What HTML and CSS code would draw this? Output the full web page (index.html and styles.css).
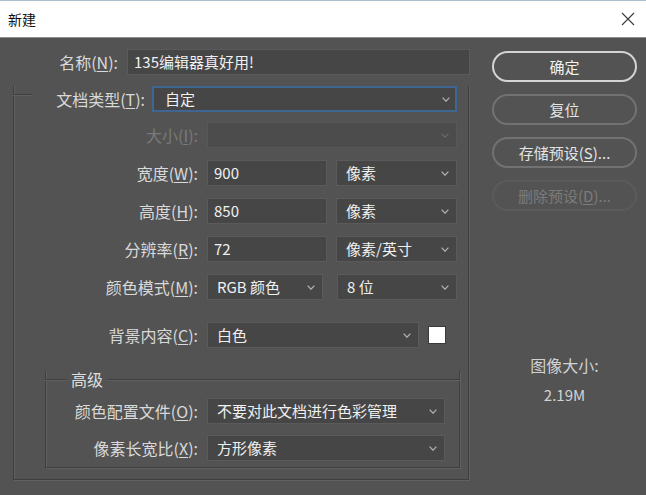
FILE: index.html
```html
<!DOCTYPE html>
<html lang="zh-CN">
<head>
    <meta charset="UTF-8">
    <meta name="viewport" content="width=device-width, initial-scale=1.0">
    <title>新建</title>
    <link rel="stylesheet" href="styles.css">
</head>
<body>
<div class="dialog">
    <!-- window title -->
    <div class="titlebar">
        <span class="title">新建</span>
        <span class="close">
            <svg width="14" height="14" viewBox="0 0 14 14"><path d="M1 1L13 13M13 1L1 13" stroke="#3a3a3a" stroke-width="1.1" fill="none"/></svg>
        </span>
    </div>

    <div class="content">
        <div class="form">
            <div class="row name-row">
                <label class="label">名称(<u>N</u>):</label>
                <div class="field name-field">135编辑器真好用!</div>
            </div>

            <div class="doc-box">
                <div class="row type-row">
                    <span class="stub"></span>
                    <label class="label">文档类型(<u>T</u>):</label>
                    <div class="field select type-select">
                        <span>自定</span>
                        <svg class="chev" width="8" height="5" viewBox="0 0 8 5"><path d="M0.6 0.6L4 4.2L7.4 0.6" fill="none" stroke="currentColor" stroke-width="1.2"/></svg>
                    </div>
                </div>

                <div class="row size-row disabled">
                    <label class="label">大小(<u>I</u>):</label>
                    <div class="field select size-select">
                        <span></span>
                        <svg class="chev" width="8" height="5" viewBox="0 0 8 5"><path d="M0.6 0.6L4 4.2L7.4 0.6" fill="none" stroke="currentColor" stroke-width="1.2"/></svg>
                    </div>
                </div>

                <div class="row">
                    <label class="label">宽度(<u>W</u>):</label>
                    <div class="field num">900</div>
                    <div class="field select unit">
                        <span>像素</span>
                        <svg class="chev" width="8" height="5" viewBox="0 0 8 5"><path d="M0.6 0.6L4 4.2L7.4 0.6" fill="none" stroke="currentColor" stroke-width="1.2"/></svg>
                    </div>
                </div>

                <div class="row">
                    <label class="label">高度(<u>H</u>):</label>
                    <div class="field num">850</div>
                    <div class="field select unit">
                        <span>像素</span>
                        <svg class="chev" width="8" height="5" viewBox="0 0 8 5"><path d="M0.6 0.6L4 4.2L7.4 0.6" fill="none" stroke="currentColor" stroke-width="1.2"/></svg>
                    </div>
                </div>

                <div class="row">
                    <label class="label">分辨率(<u>R</u>):</label>
                    <div class="field num">72</div>
                    <div class="field select unit">
                        <span>像素/英寸</span>
                        <svg class="chev" width="8" height="5" viewBox="0 0 8 5"><path d="M0.6 0.6L4 4.2L7.4 0.6" fill="none" stroke="currentColor" stroke-width="1.2"/></svg>
                    </div>
                </div>

                <div class="row">
                    <label class="label">颜色模式(<u>M</u>):</label>
                    <div class="field select mode-select">
                        <span>RGB 颜色</span>
                        <svg class="chev" width="8" height="5" viewBox="0 0 8 5"><path d="M0.6 0.6L4 4.2L7.4 0.6" fill="none" stroke="currentColor" stroke-width="1.2"/></svg>
                    </div>
                    <div class="field select depth-select">
                        <span>8 位</span>
                        <svg class="chev" width="8" height="5" viewBox="0 0 8 5"><path d="M0.6 0.6L4 4.2L7.4 0.6" fill="none" stroke="currentColor" stroke-width="1.2"/></svg>
                    </div>
                </div>

                <div class="row bg-row">
                    <label class="label">背景内容(<u>C</u>):</label>
                    <div class="field select bg-select">
                        <span>白色</span>
                        <svg class="chev" width="8" height="5" viewBox="0 0 8 5"><path d="M0.6 0.6L4 4.2L7.4 0.6" fill="none" stroke="currentColor" stroke-width="1.2"/></svg>
                    </div>
                    <span class="swatch"></span>
                </div>

                <!-- advanced group -->
                <div class="adv-box">
                    <div class="adv-head">
                        <span class="stub"></span>
                        <span class="adv-title">高级</span>
                        <span class="stub fill"></span>
                    </div>
                    <div class="row">
                        <label class="label">颜色配置文件(<u>O</u>):</label>
                        <div class="field select adv-select">
                            <span>不要对此文档进行色彩管理</span>
                            <svg class="chev" width="8" height="5" viewBox="0 0 8 5"><path d="M0.6 0.6L4 4.2L7.4 0.6" fill="none" stroke="currentColor" stroke-width="1.2"/></svg>
                        </div>
                    </div>
                    <div class="row">
                        <label class="label">像素长宽比(<u>X</u>):</label>
                        <div class="field select adv-select">
                            <span>方形像素</span>
                            <svg class="chev" width="8" height="5" viewBox="0 0 8 5"><path d="M0.6 0.6L4 4.2L7.4 0.6" fill="none" stroke="currentColor" stroke-width="1.2"/></svg>
                        </div>
                    </div>
                </div>
            </div>
        </div>

        <div class="side">
            <div class="btn primary">确定</div>
            <div class="btn">复位</div>
            <div class="btn">存储预设(<u>S</u>)...</div>
            <div class="btn disabled">删除预设(<u>D</u>)...</div>

            <div class="info">
                <p>图像大小:</p>
                <p class="size-value">2.19M</p>
            </div>
        </div>
    </div>
</div>
</body>
</html>
```

FILE: styles.css
```css
* {
    box-sizing: border-box;
}

body {
    margin: 0;
    background: #535353;
    font-family: "Noto Sans CJK SC", "Noto Sans", sans-serif;
    font-size: 15px;
    color: #d9d9d9;
}

u {
    text-underline-offset: 2px;
}

.dialog {
    width: 646px;
    height: 495px;
    overflow: hidden;
}

/* title bar */
.titlebar {
    height: 38px;
    background: #fff;
    border-top: 1px solid #adbfcf;
    border-bottom: 1px solid #8d8d8d;
    display: flex;
    align-items: center;
    justify-content: space-between;
    padding: 0 11px 0 8px;
}

.title {
    font-size: 14px;
    color: #111;
}

.close {
    display: flex;
}

.content {
    display: flex;
}

.form {
    flex: none;
    width: 470px;
    padding-top: 11px;
}

/* rows and fields */
.row {
    display: flex;
    align-items: center;
    height: 26px;
}

.label {
    flex: none;
    text-align: right;
    font-size: 16px;
    line-height: 26px;
    white-space: nowrap;
}

.field {
    flex: none;
    height: 26px;
    background: #464646;
    border: 1px solid #5a5a5a;
    color: #f0f0f0;
    line-height: 24px;
    padding: 0 6px;
    white-space: nowrap;
}

.select {
    display: flex;
    align-items: center;
    justify-content: space-between;
    padding: 0 7px 0 9px;
}

.chev {
    color: #b4b4b4;
    flex: none;
}

.name-row .label {
    width: 118px;
    margin-right: 9px;
}

.name-field {
    width: 343px;
}

/* etched group boxes */
.doc-box,
.adv-box {
    border: 1px solid #3e3e3e;
    border-top: none;
    box-shadow: 1px 1px 0 #616161, inset 1px 0 0 #616161;
}

.stub {
    height: 0;
    align-self: flex-start;
    margin-top: 8px;
    border-top: 1px solid #3e3e3e;
    box-shadow: 0 1px 0 #616161;
}

.doc-box {
    margin: 19px 0 0 13px;
    width: 456px;
    padding-bottom: 11px;
}

.doc-box .row .label {
    width: 184px;
    margin-right: 9px;
}

.doc-box > .row + .row {
    margin-top: 12px;
}

.doc-box > .row.size-row {
    margin-top: 10px;
}

.doc-box > .row.bg-row {
    margin-top: 22px;
}

.type-row {
    margin-top: -8px;
}

.type-row .stub {
    width: 19px;
    margin-left: -1px;
}

.doc-box .type-row .label {
    width: 113px;
    margin-right: 7px;
}

.type-select {
    width: 305px;
    border: 2px solid #3f6592;
    padding-left: 11px;
    padding-right: 5px;
}

.disabled .label {
    color: #7a7a7a;
}

.size-select {
    width: 250px;
    background: #4c4c4c;
    border-color: #585858;
}

.size-select .chev {
    color: #6a6a6a;
}

.num {
    width: 120px;
}

.unit {
    width: 121px;
    margin-left: 9px;
}

.mode-select {
    width: 116px;
}

.depth-select {
    width: 120px;
    margin-left: 14px;
}

.bg-select {
    width: 212px;
}

.swatch {
    width: 18px;
    height: 18px;
    background: #fff;
    border: 1px solid #3a3a3a;
    margin-left: 9px;
}

/* advanced */
.adv-box {
    margin: 31px 0 0 31px;
    width: 415px;
    padding-bottom: 6px;
}

.adv-head {
    display: flex;
    height: 16px;
    margin-top: -8px;
}

.adv-head .stub {
    width: 22px;
    margin-left: -1px;
}

.adv-head .fill {
    flex: 1;
    margin-left: 0;
    margin-right: -1px;
}

.adv-title {
    padding: 0 4px;
    font-size: 16px;
    line-height: 16px;
    color: #dedede;
}

.adv-box .row {
    margin-top: 11px;
}

.adv-box .row .label {
    width: 152px;
    margin-right: 9px;
}

.adv-select {
    width: 238px;
}

/* right column */
.side {
    flex: none;
    width: 167px;
    padding: 13px 0 0 22px;
}

.btn {
    width: 145px;
    height: 31px;
    border: 2px solid #727272;
    border-radius: 16px;
    text-align: center;
    line-height: 27px;
    color: #e4e4e4;
}

.btn + .btn {
    margin-top: 12px;
}

.btn.primary {
    border-color: #d4d4d4;
    color: #f2f2f2;
}

.btn.disabled {
    border-color: #5b5b5b;
    color: #7b7b7b;
}

.info {
    margin-top: 144px;
    text-align: center;
    font-size: 16px;
    line-height: 20px;
    color: #d2d2d2;
}

.info p {
    margin: 0;
}

.info .size-value {
    margin-top: 10px;
    font-size: 15px;
}
```
